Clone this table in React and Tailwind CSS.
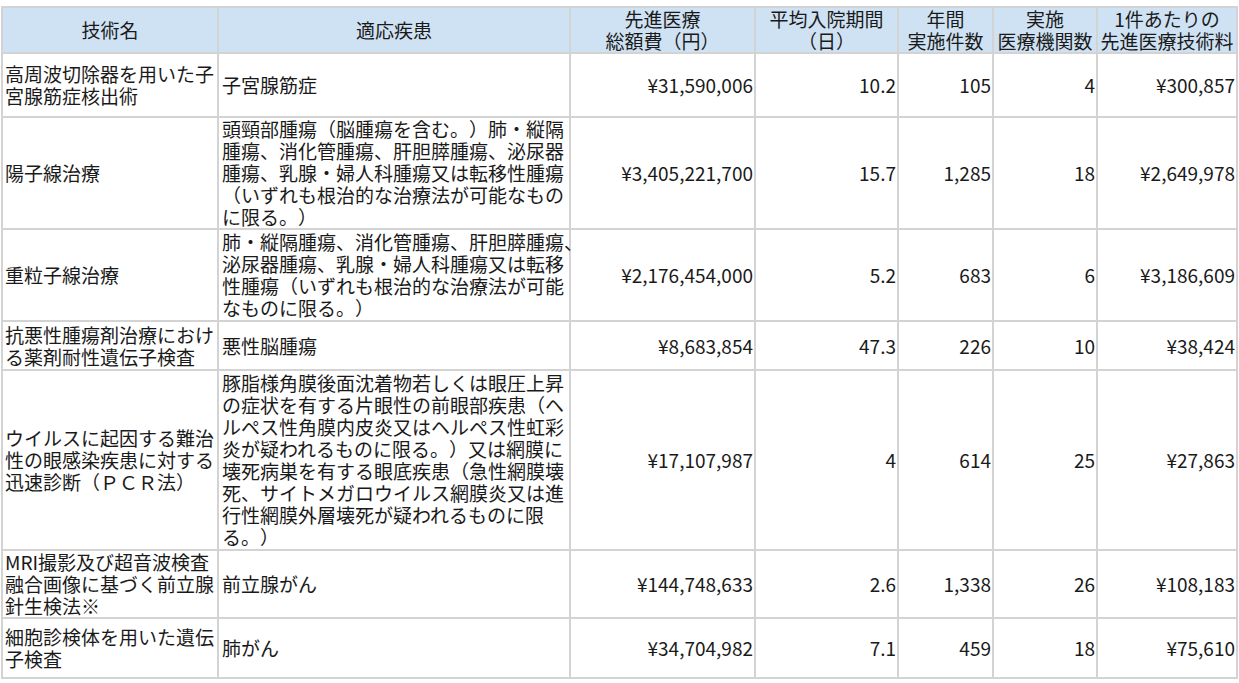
import React from "react";

const rows = [
  {
    h: "h-[64px]",
    name: ["高周波切除器を用いた子", "宮腺筋症核出術"],
    disease: ["子宮腺筋症"],
    v: ["¥31,590,006", "10.2", "105", "4", "¥300,857"],
  },
  {
    h: "h-[112px]",
    name: ["陽子線治療"],
    disease: [
      "頭頸部腫瘍（脳腫瘍を含む。）肺・縦隔",
      "腫瘍、消化管腫瘍、肝胆膵腫瘍、泌尿器",
      "腫瘍、乳腺・婦人科腫瘍又は転移性腫瘍",
      "（いずれも根治的な治療法が可能なもの",
      "に限る。）",
    ],
    v: ["¥3,405,221,700", "15.7", "1,285", "18", "¥2,649,978"],
  },
  {
    h: "h-[92px]",
    name: ["重粒子線治療"],
    disease: [
      "肺・縦隔腫瘍、消化管腫瘍、肝胆膵腫瘍、",
      "泌尿器腫瘍、乳腺・婦人科腫瘍又は転移",
      "性腫瘍（いずれも根治的な治療法が可能",
      "なものに限る。）",
    ],
    v: ["¥2,176,454,000", "5.2", "683", "6", "¥3,186,609"],
  },
  {
    h: "h-[49px]",
    name: ["抗悪性腫瘍剤治療におけ", "る薬剤耐性遺伝子検査"],
    disease: ["悪性脳腫瘍"],
    v: ["¥8,683,854", "47.3", "226", "10", "¥38,424"],
  },
  {
    h: "h-[180px]",
    name: ["ウイルスに起因する難治", "性の眼感染疾患に対する", "迅速診断（ＰＣＲ法）"],
    disease: [
      "豚脂様角膜後面沈着物若しくは眼圧上昇",
      "の症状を有する片眼性の前眼部疾患（ヘ",
      "ルペス性角膜内皮炎又はヘルペス性虹彩",
      "炎が疑われるものに限る。）又は網膜に",
      "壊死病巣を有する眼底疾患（急性網膜壊",
      "死、サイトメガロウイルス網膜炎又は進",
      "行性網膜外層壊死が疑われるものに限",
      "る。）",
    ],
    v: ["¥17,107,987", "4", "614", "25", "¥27,863"],
  },
  {
    h: "h-[67px]",
    name: ["MRI撮影及び超音波検査", "融合画像に基づく前立腺", "針生検法※"],
    disease: ["前立腺がん"],
    v: ["¥144,748,633", "2.6", "1,338", "26", "¥108,183"],
  },
  {
    h: "h-[60px]",
    name: ["細胞診検体を用いた遺伝", "子検査"],
    disease: ["肺がん"],
    v: ["¥34,704,982", "7.1", "459", "18", "¥75,610"],
  },
];

const headers = [
  ["技術名"],
  ["適応疾患"],
  ["先進医療", "総額費（円）"],
  ["平均入院期間", "（日）"],
  ["年間", "実施件数"],
  ["実施", "医療機関数"],
  ["1件あたりの", "先進医療技術料"],
];

function Lines({ lines }) {
  return lines.map((l, i) => (
    <div key={i} className="whitespace-nowrap">
      {l}
    </div>
  ));
}

export default function App() {
  return (
    <div
      className="bg-white w-[1239px] h-[683px] pt-[6px] pl-[1px] text-[#1a1a1a] [text-spacing-trim:space-all]"
      style={{ fontFamily: '"Noto Sans CJK JP", "Noto Sans", sans-serif' }}
    >
      <table className="border-collapse table-fixed w-[1237px] text-[19px] leading-[22px] border-2 border-[#d3d3d3]">
        <colgroup>
          <col className="w-[216px]" />
          <col className="w-[352px]" />
          <col className="w-[185px]" />
          <col className="w-[143px]" />
          <col className="w-[95px]" />
          <col className="w-[104px]" />
          <col className="w-[140px]" />
        </colgroup>
        <thead>
          <tr className="h-[46px] bg-[#cfe2f3]">
            {headers.map((h, i) => (
              <th
                key={i}
                className="border-2 border-[#d3d3d3] font-normal text-center align-middle px-0 py-0"
              >
                <Lines lines={h} />
              </th>
            ))}
          </tr>
        </thead>
        <tbody>
          {rows.map((r, i) => (
            <tr key={i} className={r.h}>
              <td className="border-2 border-[#d3d3d3] align-middle pl-[2px] pr-0 py-0 overflow-visible">
                <Lines lines={r.name} />
              </td>
              <td className="border-2 border-[#d3d3d3] align-middle pl-[3px] pr-0 py-0">
                <Lines lines={r.disease} />
              </td>
              {r.v.map((v, j) => (
                <td
                  key={j}
                  className="border-2 border-[#d3d3d3] align-middle text-right pr-[1px] pl-0 py-0 whitespace-nowrap"
                >
                  {v}
                </td>
              ))}
            </tr>
          ))}
        </tbody>
      </table>
    </div>
  );
}
